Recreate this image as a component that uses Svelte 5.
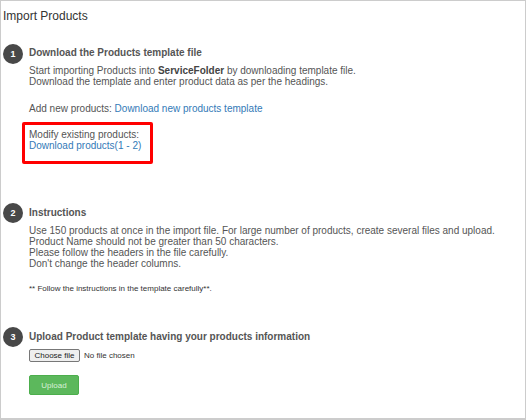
<script>
  const instructions = [
    'Use 150 products at once in the import file. For large number of products, create several files and upload.',
    'Product Name should not be greater than 50 characters.',
    'Please follow the headers in the file carefully.',
    "Don't change the header columns."
  ];
</script>

<div class="panel">
  <h1>Import Products</h1>

  <section class="step first">
    <span class="num">1</span>
    <div class="body">
      <h2>Download the Products template file</h2>
      <p>
        Start importing Products into <b>ServiceFolder</b> by downloading template file.<br />
        Download the template and enter product data as per the headings.
      </p>
      <p class="add">Add new products: <a href="#new">Download new products template</a></p>
      <div class="highlight">
        Modify existing products:<br />
        <a href="#existing">Download products(1 - 2)</a>
      </div>
    </div>
  </section>

  <section class="step second">
    <span class="num">2</span>
    <div class="body">
      <h2>Instructions</h2>
      <p>
        {#each instructions as line}
          {line}<br />
        {/each}
      </p>
      <p class="note">** Follow the instructions in the template carefully**.</p>
    </div>
  </section>

  <section class="step third">
    <span class="num">3</span>
    <div class="body">
      <h2>Upload Product template having your products information</h2>
      <div class="file">
        <button type="button" class="choose">Choose file</button>
        <span>No file chosen</span>
      </div>
      <button type="button" class="upload">Upload</button>
    </div>
  </section>
</div>

<style>
  :global(body) {
    margin: 0;
    background: #fff;
  }

  .panel {
    box-sizing: border-box;
    width: 526px;
    height: 420px;
    padding: 8px 3px 0 2px;
    border: 1px solid #ccc;
    border-bottom-width: 2px;
    font-family: "Liberation Sans", Arial, sans-serif;
    font-size: 10px;
    line-height: 11px;
    color: #555;
    overflow: hidden;
  }

  h1 {
    margin: 0;
    font-size: 12px;
    line-height: 14px;
    font-weight: 400;
    color: #333;
  }

  .step {
    display: flex;
    gap: 6px;
  }

  .first {
    margin-top: 21px;
  }

  .second {
    margin-top: 39px;
  }

  .third {
    margin-top: 33px;
  }

  .num {
    flex: none;
    width: 20px;
    height: 20px;
    border-radius: 50%;
    background: #484848;
    color: #fff;
    font-size: 9px;
    font-weight: 700;
    line-height: 20px;
    text-align: center;
  }

  h2 {
    margin: 0 0 6px;
    padding-top: 3px;
    font-size: 10px;
    line-height: 12px;
    font-weight: 700;
  }

  .second h2,
  .third h2 {
    padding-top: 4px;
  }

  p {
    margin: 0;
  }

  b {
    color: #444;
  }

  a {
    color: #337ab7;
    text-decoration: none;
  }

  .add {
    margin-top: 16px;
  }

  .highlight {
    width: 121px;
    margin: 8px 0 0 -7px;
    padding: 4px 0 10px 4px;
    border: 3px solid #f00;
    border-radius: 2px;
  }

  .note {
    margin-top: 14px;
    font-size: 8px;
    color: #333;
  }

  .file {
    display: flex;
    align-items: center;
    gap: 4px;
    margin-top: 6px;
    font-size: 8px;
    color: #333;
  }

  .choose {
    box-sizing: border-box;
    width: 51px;
    height: 13px;
    padding: 0;
    border: 1px solid #777;
    border-radius: 2px;
    background: #efefef;
    color: #222;
    font-family: "Liberation Sans", Arial, sans-serif;
    font-size: 8px;
    line-height: 11px;
  }

  .upload {
    display: block;
    width: 50px;
    height: 20px;
    margin-top: 13px;
    padding: 0;
    border: 1px solid #4cae4c;
    border-radius: 2px;
    background: #5cb85c;
    color: #d8f0d8;
    font-family: "Liberation Sans", Arial, sans-serif;
    font-size: 8px;
  }
</style>
